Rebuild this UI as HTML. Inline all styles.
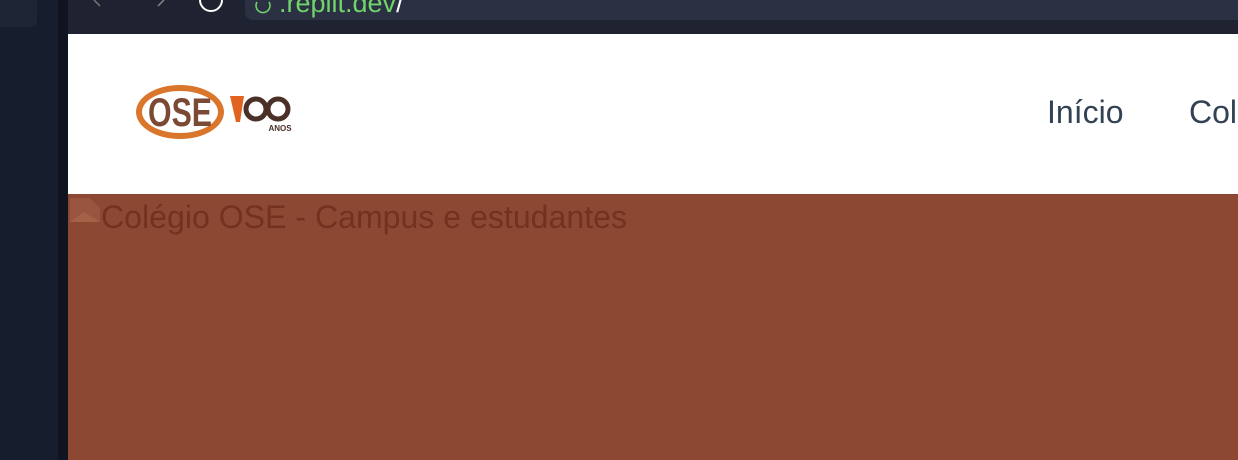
<!DOCTYPE html>
<html><head><meta charset="utf-8"><style>
*{margin:0;padding:0;box-sizing:border-box}
body{width:1238px;height:460px;overflow:hidden;background:#1e2230;font-family:"Liberation Sans",sans-serif;position:relative}
.side{position:absolute;left:0;top:0;width:68px;height:460px;background:#161d2d}
.side .blk{position:absolute;left:0;top:0;width:37px;height:27px;background:#1e2535;border-radius:0 0 6px 0}
.side .edge{position:absolute;left:58px;top:0;width:10px;height:460px;background:#0f1420}
.bar{position:absolute;left:68px;top:0;right:0;height:33px;background:#1f2331}
.url{position:absolute;left:245px;top:0;right:0;height:20px;background:#2b3042;border-radius:0 0 0 8px}
.url span{position:absolute;left:34px;top:-12px;color:#6fd46a;font-size:27px;white-space:nowrap}
.url span b{color:#fff;font-weight:normal}
.hdr{position:absolute;left:68px;top:34px;right:0;height:160px;background:#fff}
.nav{position:absolute;top:60px;font-size:32px;color:#334155}
.hero{position:absolute;left:68px;top:194px;right:0;bottom:0;background:#8d4833}
.hero .t{position:absolute;left:33px;top:5px;font-size:32.1px;color:#73321f;white-space:nowrap}
</style></head><body>
<div class="side"><div class="blk"></div><div class="edge"></div></div>
<div class="bar">
<svg style="position:absolute;left:20px;top:0" width="20" height="12"><path d="M6 0 L12 6" stroke="#777" stroke-width="1.5" fill="none"/></svg>
<svg style="position:absolute;left:84px;top:0" width="20" height="12"><path d="M12 0 L6 6" stroke="#888" stroke-width="1.5" fill="none"/></svg>
<svg style="position:absolute;left:130px;top:0" width="26" height="12"><path d="M2 0 A11 11 0 0 0 24 0" stroke="#fff" stroke-width="2" fill="none"/></svg>
</div>
<div class="url"><svg style="position:absolute;left:8px;top:0" width="20" height="14"><path d="M16 2 A7 7 0 1 1 4 2" stroke="#6fd46a" stroke-width="1.5" fill="none"/></svg><span>.replit.dev<b>/</b></span></div>
<div class="hdr">
<svg style="position:absolute;left:64px;top:48px" width="164" height="62" viewBox="0 0 164 62">
<ellipse cx="48" cy="30" rx="44" ry="27" fill="#d9762c"/>
<ellipse cx="48" cy="30" rx="38" ry="21" fill="#fff"/>
<text x="48" y="44" text-anchor="middle" font-family="Liberation Sans" font-weight="bold" font-size="40" fill="#7a4a35" textLength="64" lengthAdjust="spacingAndGlyphs">OSE</text>
<path d="M98 14 L112 14 L108 40 L104 40 Z" fill="#e0641f"/>
<circle cx="124" cy="27" r="10" fill="none" stroke="#4a3026" stroke-width="5"/>
<circle cx="146" cy="27" r="10" fill="none" stroke="#4a3026" stroke-width="5"/>
<text x="148" y="49" text-anchor="middle" font-size="8" font-weight="bold" fill="#4a3026">ANOS</text>
</svg>
<div class="nav" style="left:979px">Início</div>
<div class="nav" style="left:1121px">Col</div>
</div>
<div class="hero"><svg style="position:absolute;left:0;top:2px" width="34" height="28"><path d="M2 2 H22 L32 12 V26 H2 Z" fill="#9a5540"/><path d="M2 26 L16 16 L32 26 Z" fill="#a76048"/></svg><div class="t">Colégio OSE - Campus e estudantes</div></div>
</body></html>
